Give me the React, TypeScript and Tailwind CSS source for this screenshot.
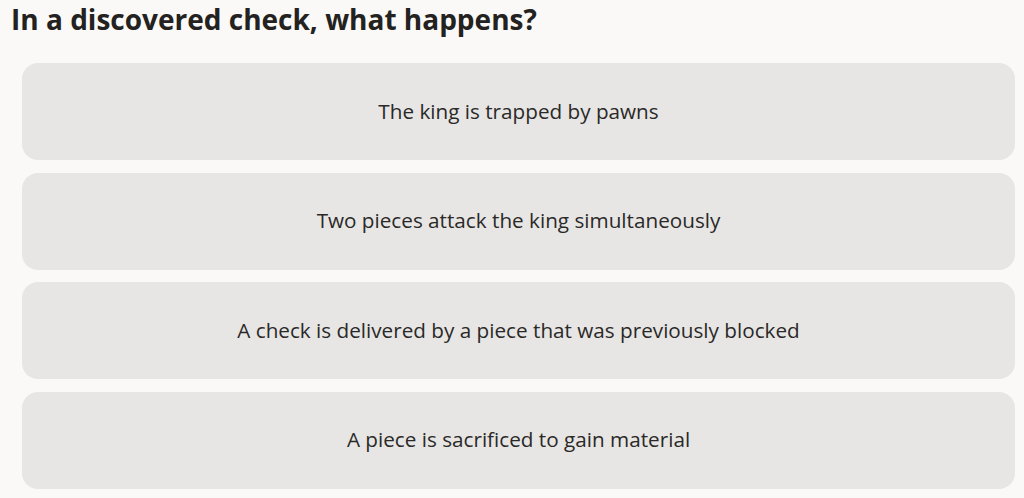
const options = [
  'The king is trapped by pawns',
  'Two pieces attack the king simultaneously',
  'A check is delivered by a piece that was previously blocked',
  'A piece is sacrificed to gain material',
];

export default function App() {
  return (
    <div className="min-h-[498px] w-[1024px] bg-[#faf9f7] font-['Open_Sans',sans-serif] text-[#222]">
      <h1 className="pl-[11px] text-[28px] font-bold leading-[38px] text-[#232220]">
        In a discovered check, what happens?
      </h1>
      <div className="ml-[22px] mt-[25px] flex w-[993px] flex-col gap-[12.5px]">
        {options.map((opt) => (
          <button
            key={opt}
            className="flex h-[97px] items-center justify-center rounded-[16px] bg-[#e7e6e4] text-[20.7px] text-[#2a2928]"
          >
            {opt}
          </button>
        ))}
      </div>
    </div>
  );
}
